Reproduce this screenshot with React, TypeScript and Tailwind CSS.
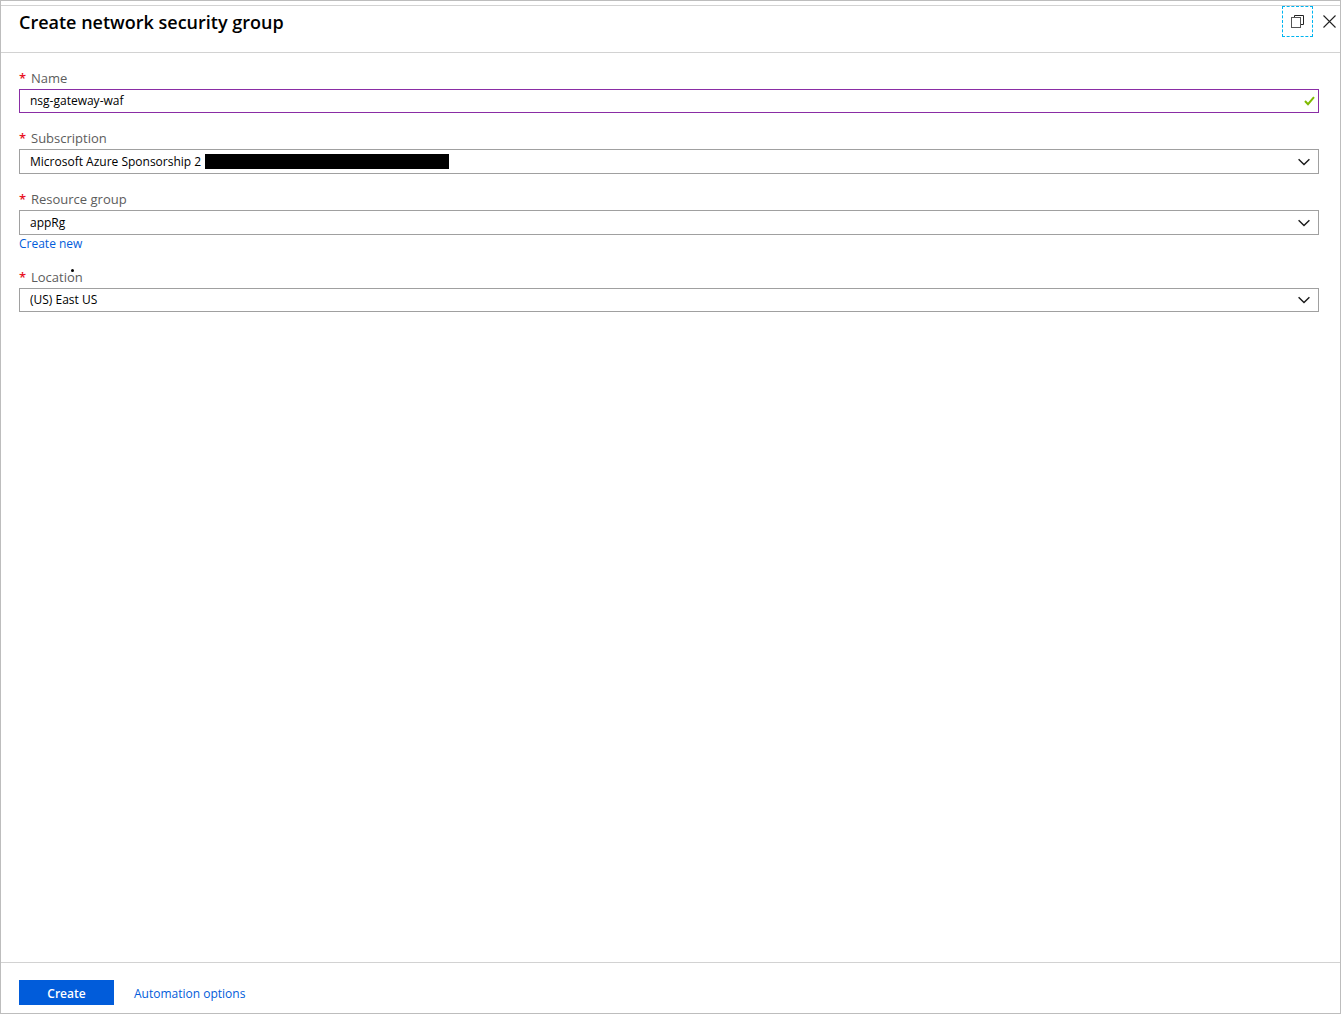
import type { ReactNode } from "react";

function Label({ htmlFor, children }: { htmlFor: string; children: ReactNode }) {
  return (
    <label htmlFor={htmlFor} className="flex h-5 items-start gap-1.5 text-[13px] leading-[18px] text-[#5c5c5c]">
      <span aria-hidden="true" className="w-1.5 font-semibold text-[#e81123]">*</span>
      <span className="relative">{children}</span>
    </label>
  );
}

function Chevron() {
  return (
    <svg
      viewBox="0 0 12 8"
      className="pointer-events-none absolute top-1/2 right-[9px] h-2 w-3 -translate-y-1/2"
      fill="none"
      stroke="#1a1a1a"
      strokeWidth="1.4"
      aria-hidden="true"
    >
      <path d="M0.6 1.2 L6 6.6 L11.4 1.2" />
    </svg>
  );
}

function SelectBox({ id, value, height, children }: { id: string; value: string; height: string; children?: ReactNode }) {
  return (
    <div className="relative">
      <select
        id={id}
        defaultValue={value}
        className={`block w-full appearance-none border border-[#a0a0a0] bg-white pr-8 pl-2.5 text-[12px] text-black outline-none ${height}`}
      >
        <option value={value}>{value}</option>
      </select>
      {children}
      <Chevron />
    </div>
  );
}

export default function App() {
  return (
    <div className="flex min-h-screen flex-col border border-[#bdbdbd] bg-white pt-1 font-['Open_Sans','Noto_Sans',sans-serif] text-black">
      <header className="flex h-12 items-start justify-between border-t border-b border-[#d2d2d2] pr-1 pl-[18px]">
        <h1 className="pt-1 text-[18px] leading-6 font-semibold">Create network security group</h1>
        <div className="flex items-center gap-2.5">
          <button
            type="button"
            aria-label="Restore"
            className="flex h-[31px] w-[31px] items-center justify-center border border-dashed border-[#00b4f0]"
          >
            <svg viewBox="0 0 13 13" className="h-[13px] w-[13px]" fill="none" aria-hidden="true">
              <path d="M3.5 3 V0.5 H12.5 V9.5 H10" stroke="#222" />
              <rect x="0.5" y="2.5" width="9" height="10" stroke="#555" />
            </svg>
          </button>
          <button type="button" aria-label="Close" className="flex h-[31px] items-center">
            <svg viewBox="0 0 13 13" className="h-[13px] w-[13px]" stroke="#222" strokeWidth="1.1" aria-hidden="true">
              <path d="M0.5 0.5 L12.5 12.5 M12.5 0.5 L0.5 12.5" />
            </svg>
          </button>
        </div>
      </header>

      <main className="flex flex-1 flex-col gap-4 pt-4 pr-[21px] pl-[18px]">
        <div>
          <Label htmlFor="name">Name</Label>
          <div className="relative">
            <input
              id="name"
              type="text"
              defaultValue="nsg-gateway-waf"
              className="block h-6 w-full border border-[#8a2da5] bg-white pr-8 pb-0.5 pl-2.5 text-[12px] outline-none"
            />
            <svg
              viewBox="0 0 11 10"
              className="absolute top-1/2 right-1 h-2.5 w-[11px] -translate-y-1/2"
              fill="none"
              stroke="#7fba00"
              strokeWidth="2"
              aria-hidden="true"
            >
              <path d="M1 5 L4 8.2 L10 1.2" />
            </svg>
          </div>
        </div>

        <div>
          <Label htmlFor="subscription">Subscription</Label>
          <SelectBox id="subscription" value="Microsoft Azure Sponsorship 2" height="h-[25px]">
            <span className="absolute top-[5px] left-[186px] h-[15px] w-[244px] bg-black" />
          </SelectBox>
        </div>

        <div>
          <Label htmlFor="resource-group">Resource group</Label>
          <SelectBox id="resource-group" value="appRg" height="h-[25px]" />
          <a href="#create-new" className="block w-fit text-[12px] leading-[17px] text-[#015cda]">Create new</a>
        </div>

        <div>
          <Label htmlFor="location">
            Location
            <span className="absolute top-px left-10 h-[3px] w-[3px] rounded-full bg-black" />
          </Label>
          <SelectBox id="location" value="(US) East US" height="h-6" />
        </div>
      </main>

      <footer className="flex items-center gap-5 border-t border-[#d2d2d2] pt-[17px] pb-2 pl-[18px]">
        <button type="button" className="h-[25px] w-[95px] bg-[#015cda] pt-0.5 text-[12px] font-semibold text-white">Create</button>
        <a href="#automation" className="pt-0.5 text-[12px] leading-[17px] text-[#015cda]">Automation options</a>
      </footer>
    </div>
  );
}
